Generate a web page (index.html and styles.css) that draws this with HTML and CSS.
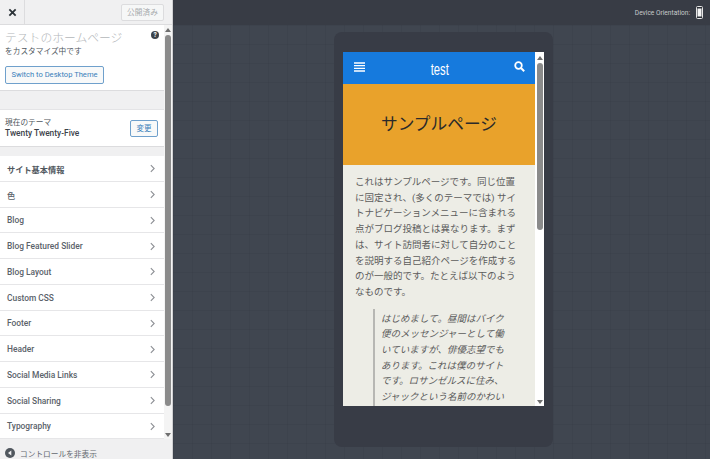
FILE: index.html
```html
<!DOCTYPE html>
<html lang="ja">
<head>
<meta charset="utf-8">
<title>テストのホームページ</title>
<link rel="stylesheet" href="styles.css">
</head>
<body>
<div class="app">
  <aside class="side">
    <div class="side-top">
      <div class="close"><svg width="9" height="9" viewBox="0 0 10 10"><path d="M1.5 1.5l7 7M8.5 1.5l-7 7" stroke="#2c3338" stroke-width="2"/></svg></div>
      <div class="publish">公開済み</div>
    </div>
    <div class="side-body">
      <div class="side-main">
        <section class="head">
          <div class="head-title"><span class="site">テストのホームページ</span><span class="help">?</span></div>
          <div class="head-sub">をカスタマイズ中です</div>
          <div class="btn wide">Switch to Desktop Theme</div>
        </section>
        <div class="gap g1"></div>
        <section class="theme">
          <div>
            <div class="theme-label">現在のテーマ</div>
            <div class="theme-name">Twenty Twenty-Five</div>
          </div>
          <div class="btn small">変更</div>
        </section>
        <div class="gap g2"></div>
        <div class="row strong"><span>サイト基本情報</span><svg class="chev" viewBox="0 0 6 10"><path d="M1 1l4 4-4 4"/></svg></div>
        <div class="row cjk"><span>色</span><svg class="chev" viewBox="0 0 6 10"><path d="M1 1l4 4-4 4"/></svg></div>
        <div class="row"><span>Blog</span><svg class="chev" viewBox="0 0 6 10"><path d="M1 1l4 4-4 4"/></svg></div>
        <div class="row"><span>Blog Featured Slider</span><svg class="chev" viewBox="0 0 6 10"><path d="M1 1l4 4-4 4"/></svg></div>
        <div class="row"><span>Blog Layout</span><svg class="chev" viewBox="0 0 6 10"><path d="M1 1l4 4-4 4"/></svg></div>
        <div class="row"><span>Custom CSS</span><svg class="chev" viewBox="0 0 6 10"><path d="M1 1l4 4-4 4"/></svg></div>
        <div class="row"><span>Footer</span><svg class="chev" viewBox="0 0 6 10"><path d="M1 1l4 4-4 4"/></svg></div>
        <div class="row"><span>Header</span><svg class="chev" viewBox="0 0 6 10"><path d="M1 1l4 4-4 4"/></svg></div>
        <div class="row"><span>Social Media Links</span><svg class="chev" viewBox="0 0 6 10"><path d="M1 1l4 4-4 4"/></svg></div>
        <div class="row"><span>Social Sharing</span><svg class="chev" viewBox="0 0 6 10"><path d="M1 1l4 4-4 4"/></svg></div>
        <div class="row"><span>Typography</span><svg class="chev" viewBox="0 0 6 10"><path d="M1 1l4 4-4 4"/></svg></div>
      </div>
      <div class="bar side-bar">
        <i class="up"></i><b class="thumb"></b><i class="down"></i>
      </div>
    </div>
    <div class="side-foot">
      <svg class="hide-icon" width="10" height="10" viewBox="0 0 10 10"><circle cx="5" cy="5" r="5" fill="#50575e"/><path d="M6.3 2.6v4.8L3 5z" fill="#f0f0f1"/></svg>
      <span>コントロールを非表示</span>
    </div>
  </aside>
  <main class="stage">
    <div class="stage-top">
      <span>Device Orientation:</span>
      <svg width="7" height="13" viewBox="0 0 7 13"><rect x="0.5" y="0.5" width="6" height="12" rx="1" fill="#2b2f36" stroke="#e6e6e6"/><rect x="1.5" y="2.5" width="4" height="8" fill="#f4f4f4"/></svg>
    </div>
    <div class="canvas">
      <div class="phone">
        <div class="screen">
          <div class="page">
            <header class="nav">
              <svg width="11" height="10" viewBox="0 0 11 10"><path d="M0 1h11M0 3.7h11M0 6.3h11M0 9h11" stroke="#fff" stroke-width="1.3"/></svg>
              <span class="logo">test</span>
              <svg width="11" height="11" viewBox="0 0 11 11"><circle cx="4.5" cy="4.5" r="3.3" fill="none" stroke="#fff" stroke-width="1.8"/><path d="M7 7l3.2 3.2" stroke="#fff" stroke-width="2"/></svg>
            </header>
            <div class="hero"><h1>サンプルページ</h1></div>
            <article class="copy">
              <p>これはサンプルページです。同じ位置に固定され、(多くのテーマでは) サイトナビゲーションメニューに含まれる点がブログ投稿とは異なります。まずは、サイト訪問者に対して自分のことを説明する自己紹介ページを作成するのが一般的です。たとえば以下のようなものです。</p>
              <blockquote>はじめまして。昼間はバイク便のメッセンジャーとして働いていますが、俳優志望でもあります。これは僕のサイトです。ロサンゼルスに住み、ジャックという名前のかわいい愛犬がいます。</blockquote>
            </article>
          </div>
          <div class="bar screen-bar">
            <i class="up"></i><b class="thumb"></b><i class="down"></i>
          </div>
        </div>
      </div>
    </div>
  </main>
</div>
</body>
</html>
```

FILE: styles.css
```css
* { box-sizing: border-box; }
html, body { margin: 0; height: 100%; overflow: hidden; }
body { font-family: Roboto, "Noto Sans CJK JP", sans-serif; color: #50575e; }
.app { display: grid; grid-template-columns: 173px 1fr; height: 459px; }

/* sidebar */
.side { display: flex; flex-direction: column; height: 459px; background: #f0f0f1; border-right: 1px solid #d0d0d2; overflow: hidden; }
.side-top { flex: 0 0 25px; display: flex; align-items: center; justify-content: space-between; background: #f0f0f1; border-bottom: 1px solid #dcdcde; padding-right: 8px; }
.close { width: 25px; height: 24px; display: flex; align-items: center; justify-content: center; border-right: 1px solid #dcdcde; }
.publish { width: 43px; height: 17px; border: 1px solid #dcdcde; border-radius: 2px; background: #f6f7f7; color: #a7aaad; font-size: 7.7px; line-height: 15px; text-align: center; }
.side-body { flex: 0 0 414px; display: flex; min-height: 0; }
.side-main { width: 164px; display: flex; flex-direction: column; }
.head { flex: 0 0 66px; background: #fff; padding: 5px 5px 0 5px; border-bottom: 1px solid #dcdcde; }
.head-title { display: flex; justify-content: space-between; align-items: flex-start; }
.site { font-size: 11.8px; line-height: 17px; color: #b4b7ba; font-weight: 300; }
.help { width: 8px; height: 8px; margin-top: 1px; border-radius: 50%; background: #3c434a; color: #fff; font-size: 6.5px; font-weight: 700; line-height: 8px; text-align: center; }
.head-sub { font-size: 7.7px; line-height: 10px; color: #50575e; }
.btn { border: 1px solid #6fa0cc; border-radius: 2px; color: #3a7fba; background: #f8f9f9; text-align: center; white-space: nowrap; }
.wide { width: 99px; height: 18px; margin-top: 9px; font-size: 7.6px; line-height: 16px; }
.gap { background: #f0f0f1; }
.g1 { flex: 0 0 18px; }
.theme { flex: 0 0 38px; background: #fff; border-top: 1px solid #e4e4e6; border-bottom: 1px solid #dcdcde; display: flex; justify-content: space-between; align-items: center; padding: 0 6px 0 5px; }
.theme-label { font-size: 7.7px; line-height: 11px; color: #50575e; }
.theme-name { font-size: 8.4px; line-height: 11px; font-weight: 500; color: #3c434a; }
.small { width: 28px; height: 17px; font-size: 7.5px; line-height: 15px; }
.g2 { flex: 0 0 9px; }
.row { flex: 0 0 25.75px; background: #fff; border-bottom: 1px solid #e6e6e8; display: flex; align-items: center; justify-content: space-between; padding: 1px 9px 0 7px; font-size: 8.4px; font-weight: 500; color: #5a626a; }
.row.strong { font-size: 8.2px; font-weight: 700; color: #50575e; }
.row.cjk { font-size: 8.2px; }
.chev { width: 5px; height: 9px; fill: none; stroke: #8c8f94; stroke-width: 1.3; }
.side-foot { flex: 1; display: flex; align-items: center; gap: 5px; padding: 8px 0 0 5px; font-size: 7.7px; color: #646970; background: #f0f0f1; }
.hide-icon { flex: none; }

/* fake scrollbars */
.bar { display: flex; flex-direction: column; align-items: center; }
.side-bar { width: 8px; padding: 3px 0 2px; background: #f4f4f4; }
.screen-bar { flex: 0 0 9px; height: 354px; padding: 4px 0 2px; background: #fff; }
.up { width: 0; height: 0; border: 3px solid transparent; border-top: 0; border-bottom: 4px solid #6f6f6f; }
.down { width: 0; height: 0; border: 3px solid transparent; border-bottom: 0; border-top: 4px solid #6f6f6f; margin-top: auto; }
.thumb { width: 6px; border-radius: 3px; background: #8b8b8b; }
.side-bar .thumb { height: 371px; margin-top: 3px; }
.screen-bar .thumb { height: 167px; margin-top: 3px; }

/* stage */
.stage { display: flex; flex-direction: column; height: 459px; min-width: 0; background: #3e444e; }
.stage-top { flex: 0 0 25px; display: flex; align-items: center; justify-content: flex-end; gap: 6px; padding: 0 7px 0 0; background: #383c45; color: #c8cacc; font-size: 6.6px; }
.canvas { flex: 1; padding: 7px 157px 0 161px; background-color: #404650; background-image: linear-gradient(rgba(0,0,0,.04) 1px, transparent 1px), linear-gradient(90deg, rgba(0,0,0,.04) 1px, transparent 1px); background-size: 19px 19px; }
.phone { width: 219px; height: 415px; background: #383c46; border-radius: 8px; padding: 20px 9px 0 9px; }
.screen { display: flex; width: 201px; height: 354px; overflow: hidden; }
.page { flex: 0 0 192px; background: #edede6; overflow: hidden; }
.nav { height: 32px; background: #167add; display: flex; align-items: center; justify-content: space-between; padding: 0 10px 0 11px; }
.nav svg { margin-top: -3px; }
.logo { font-family: "Liberation Sans", sans-serif; font-size: 17px; line-height: 1; color: #fff; transform: scaleX(.66); margin-top: 2px; }
.hero { height: 81px; background: #e9a22b; display: flex; align-items: center; justify-content: center; }
h1 { margin: 2px 0 0; font-size: 16.7px; font-weight: 400; color: #2a2a2a; line-height: 1; }
.copy { padding: 9px 18px 0 12px; font-size: 9.5px; line-height: 15.7px; color: #5c5c5c; }
.copy p { margin: 0 0 9px; }
blockquote { margin: 0 10px 0 18px; padding: 2px 0 0 6px; border-left: 2px solid #b7b7b3; font-style: italic; height: 120px; }
```
